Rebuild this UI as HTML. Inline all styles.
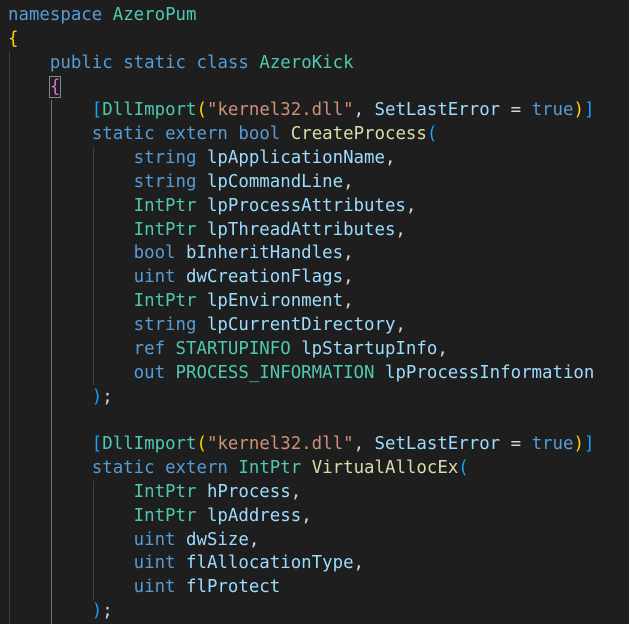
<!DOCTYPE html><html><head><style>
body{margin:0;background:#1e1e1e;width:629px;height:624px;overflow:hidden;position:relative}
pre{margin:0;position:absolute;top:4px;left:8px;font-family:"DejaVu Sans Mono","Liberation Mono",monospace;font-size:17.4px;line-height:23.84px;color:#d4d4d4;letter-spacing:0}
.k{color:#569cd6}.t{color:#4ec9b0}.p{color:#9cdcfe}.s{color:#ce9178}.f{color:#dcdcaa}
.g{color:#ffd700}.m{color:#da70d6}.b{color:#179fff}
.box{outline:1px solid #888;outline-offset:0}
.gd{position:absolute;width:1px;background:#404040}
</style></head><body>
<div class="gd" style="left:9px;top:52px;height:572px"></div>
<div class="gd" style="left:51px;top:100px;height:524px;background:#707070"></div>
<div class="gd" style="left:93px;top:147px;height:238px"></div>
<div class="gd" style="left:93px;top:481px;height:119px"></div>
<pre><span class="k">namespace</span> <span class="t">AzeroPum</span>
<span class="g">{</span>
    <span class="k">public</span> <span class="k">static</span> <span class="k">class</span> <span class="t">AzeroKick</span>
    <span class="m box">{</span>
        <span class="b">[</span><span class="t">DllImport</span><span class="g">(</span><span class="s">"kernel32.dll"</span>, <span class="p">SetLastError</span> = <span class="k">true</span><span class="g">)</span><span class="b">]</span>
        <span class="k">static</span> <span class="k">extern</span> <span class="k">bool</span> <span class="f">CreateProcess</span><span class="b">(</span>
            <span class="k">string</span> <span class="p">lpApplicationName</span>,
            <span class="k">string</span> <span class="p">lpCommandLine</span>,
            <span class="t">IntPtr</span> <span class="p">lpProcessAttributes</span>,
            <span class="t">IntPtr</span> <span class="p">lpThreadAttributes</span>,
            <span class="k">bool</span> <span class="p">bInheritHandles</span>,
            <span class="k">uint</span> <span class="p">dwCreationFlags</span>,
            <span class="t">IntPtr</span> <span class="p">lpEnvironment</span>,
            <span class="k">string</span> <span class="p">lpCurrentDirectory</span>,
            <span class="k">ref</span> <span class="t">STARTUPINFO</span> <span class="p">lpStartupInfo</span>,
            <span class="k">out</span> <span class="t">PROCESS_INFORMATION</span> <span class="p">lpProcessInformation</span>
        <span class="b">)</span>;

        <span class="b">[</span><span class="t">DllImport</span><span class="g">(</span><span class="s">"kernel32.dll"</span>, <span class="p">SetLastError</span> = <span class="k">true</span><span class="g">)</span><span class="b">]</span>
        <span class="k">static</span> <span class="k">extern</span> <span class="t">IntPtr</span> <span class="f">VirtualAllocEx</span><span class="b">(</span>
            <span class="t">IntPtr</span> <span class="p">hProcess</span>,
            <span class="t">IntPtr</span> <span class="p">lpAddress</span>,
            <span class="k">uint</span> <span class="p">dwSize</span>,
            <span class="k">uint</span> <span class="p">flAllocationType</span>,
            <span class="k">uint</span> <span class="p">flProtect</span>
        <span class="b">)</span>;
</pre></body></html>
